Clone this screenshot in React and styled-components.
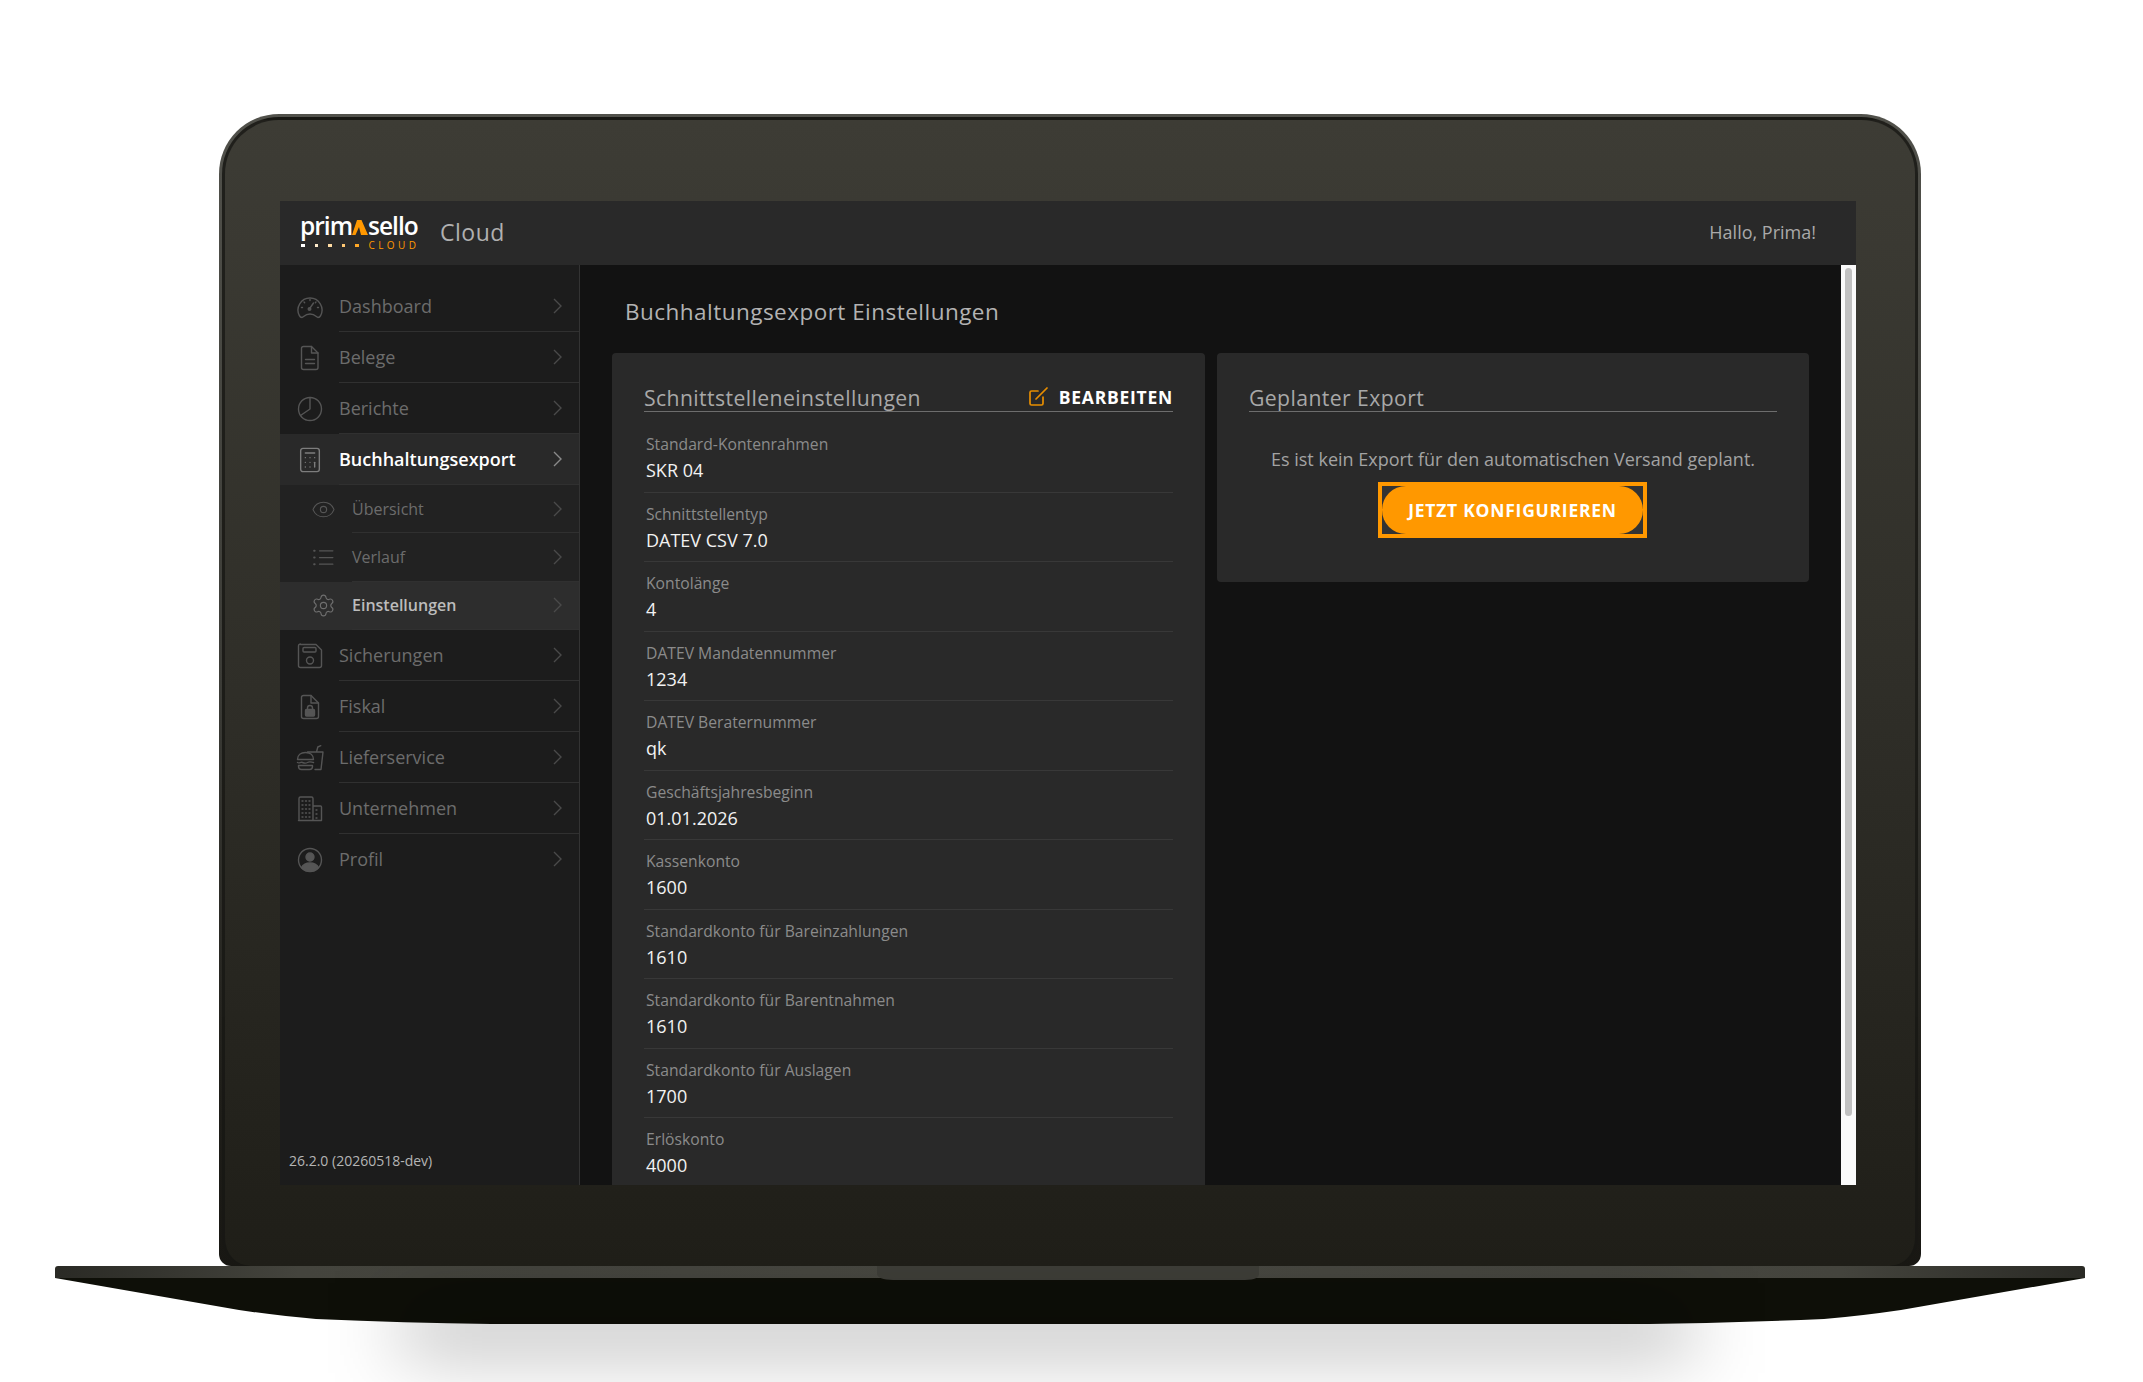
import React from "react";
import styled, { createGlobalStyle } from "styled-components";
import { Calculator, Eye, Settings } from "lucide-react";

const GlobalStyle = createGlobalStyle`
  html, body {
    margin: 0;
    padding: 0;
    background: #fff;
    font-family: "Open Sans", "Noto Sans", sans-serif;
  }
  * { box-sizing: border-box; }
`;

const Page = styled.div`
  position: relative;
  width: 2143px;
  height: 1382px;
  padding-top: 114px;
  overflow: hidden;
  background: #fff;
`;

const FloorShadow = styled.div`
  position: absolute;
  left: 400px;
  right: 450px;
  top: 1305px;
  height: 46px;
  background: rgba(0, 0, 0, 0.3);
  filter: blur(38px);
`;

const LidEdge = styled.div`
  position: relative;
  width: 1702px;
  height: 1152px;
  margin-left: 219px;
  padding: 3px 3px 0;
  border-radius: 60px 60px 12px 12px;
  background: linear-gradient(180deg, #51514b 0%, #3b3b36 50%, #1f1e19 85%, #181713 100%);
`;

const Lid = styled.div`
  height: 100%;
  padding: 81px 0 0 55px;
  border: 3px solid rgba(22, 22, 19, 0.72);
  border-bottom: 0;
  border-radius: 57px 57px 28px 28px;
  background: linear-gradient(180deg, #3d3c35 0%, #2f2e28 50%, #1f1e18 100%);
`;

const Screen = styled.div`
  width: 1576px;
  height: 984px;
  display: flex;
  flex-direction: column;
  overflow: hidden;
`;

const Header = styled.header`
  height: 64px;
  flex: none;
  display: flex;
  align-items: center;
  padding: 0 40px 0 20px;
  background: #292929;
`;

const Logo = styled.div`
  width: 116px;
  display: flex;
  flex-direction: column;
`;

const Wordmark = styled.div`
  display: flex;
  align-items: baseline;
  justify-content: space-between;
  height: 20px;
  font-weight: 600;
  font-size: 24.5px;
  line-height: 20px;
  letter-spacing: -1px;
  color: #fff;

  svg {
    flex: none;
  }
`;

const LogoTail = styled.div`
  display: flex;
  align-items: center;
  justify-content: space-between;
  height: 10px;
  margin-top: 4.5px;
`;

const Dots = styled.div`
  display: flex;
  gap: 10px;
  margin-left: 1px;
`;

const Dot = styled.i`
  width: 3.5px;
  height: 3.5px;
  background: ${(p) => p.$color};
`;

const CloudMark = styled.span`
  font-size: 10px;
  line-height: 10px;
  letter-spacing: 3.4px;
  margin-right: -3.4px;
  color: #ff9800;
`;

const AppName = styled.div`
  margin: 0 0 2px 24px;
  font-size: 23px;
  letter-spacing: 0.5px;
  color: #b0b0b0;
`;

const Greeting = styled.div`
  margin: 0 0 2px auto;
  font-size: 18px;
  color: #a9a9a9;
`;

const Body = styled.div`
  flex: 1;
  display: flex;
  min-height: 0;
`;

const Sidebar = styled.aside`
  width: 300px;
  flex: none;
  display: flex;
  flex-direction: column;
  padding-top: 16px;
  border-right: 1px solid #333;
  background: #1c1c1c;
`;

const NavRow = styled.div`
  height: ${(p) => (p.$sub ? "48.4px" : "51px")};
  display: flex;
  background: ${(p) =>
    p.$current ? "#2d2d2d" : p.$open ? "#292929" : p.$sub ? "#222" : "transparent"};
`;

const NavIconSlot = styled.div`
  width: ${(p) => (p.$sub ? "72px" : "59px")};
  flex: none;
  display: flex;
  align-items: center;
  justify-content: ${(p) => (p.$sub ? "flex-end" : "center")};
  padding-right: ${(p) => (p.$sub ? "16px" : "0")};
  color: ${(p) => (p.$open ? "#7d7d7d" : p.$current ? "#6e6e6e" : "#555")};

  svg {
    display: block;
  }
`;

const NavLabel = styled.div`
  flex: 1;
  display: flex;
  align-items: center;
  justify-content: space-between;
  padding-right: 17px;
  border-bottom: 1px solid ${(p) => (p.$last ? "transparent" : "#303030")};
  font-size: ${(p) => (p.$sub ? "16px" : "18px")};
  font-weight: ${(p) => (p.$open || p.$current ? 600 : 400)};
  color: ${(p) => (p.$open ? "#fff" : p.$current ? "#bcbcbc" : "#6c6c6c")};
`;

const Chevron = styled.svg`
  width: 9px;
  height: 16px;
  fill: none;
  stroke: ${(p) => (p.$open ? "#8a8a8a" : "#4a4a4a")};
  stroke-width: 1.4;
`;

const Version = styled.div`
  margin-top: auto;
  padding: 0 0 14px 9px;
  font-size: 14px;
  line-height: 20px;
  color: #b5b5b5;
`;

const Main = styled.main`
  flex: 1;
  min-width: 0;
  padding: 32px 32px 0;
  overflow: hidden;
  background: #121212;
`;

const PageTitle = styled.h1`
  margin: 0 0 26px 13px;
  font-size: 22.5px;
  line-height: 30px;
  font-weight: 400;
  letter-spacing: 0.47px;
  color: #b3b3b3;
`;

const Columns = styled.div`
  display: grid;
  grid-template-columns: 593px 592px;
  gap: 12px;
  align-items: start;
`;

const Card = styled.section`
  padding: 30px 32px ${(p) => (p.$tall ? "0" : "44px")};
  border-radius: 4px;
  background: #292929;
`;

const CardHead = styled.div`
  height: 29px;
  padding-top: 2px;
  display: flex;
  align-items: center;
  justify-content: space-between;
  border-bottom: 1px solid #6d6d6d;
`;

const CardTitle = styled.h2`
  margin: 0;
  font-size: 21.2px;
  line-height: 26px;
  font-weight: 400;
  letter-spacing: 0.4px;
  color: #a8a8a8;
`;

const EditLink = styled.button`
  display: flex;
  align-items: center;
  gap: 11px;
  padding: 0 0 2px;
  border: 0;
  background: none;
  font: 700 17.5px "Open Sans", sans-serif;
  letter-spacing: 0.75px;
  color: #fff;

  svg {
    display: block;
    fill: none;
    stroke: #e88e00;
    stroke-width: 1.7;
    stroke-linecap: round;
  }
`;

const Fields = styled.div`
  margin-top: 11px;
`;

const Field = styled.div`
  height: 69.55px;
  padding: 10px 0 0 2px;
  border-bottom: 1px solid #383838;
`;

const FieldLabel = styled.div`
  font-size: 15.7px;
  line-height: 22px;
  color: #8b8b8b;
`;

const FieldValue = styled.div`
  margin-top: 2px;
  font-size: 18px;
  line-height: 26px;
  color: #f2f2f2;
`;

const EmptyNote = styled.p`
  margin: 34px 0 10px;
  text-align: center;
  font-size: 18px;
  line-height: 26px;
  color: #a3a3a3;
`;

const FocusRing = styled.div`
  width: 269px;
  height: 56px;
  margin: 0 0 0 129px;
  border: 4px solid #ff9800;
  background: #333;
`;

const PrimaryButton = styled.button`
  width: 100%;
  height: 100%;
  border: 0;
  border-radius: 24px;
  background: #ff9800;
  font: 700 17.5px "Open Sans", sans-serif;
  letter-spacing: 0.75px;
  color: #fff;
`;

const Scrollbar = styled.div`
  width: 15px;
  flex: none;
  padding: 3px 4px 0;
  background: #fafafa;
`;

const ScrollThumb = styled.div`
  height: 848px;
  border-radius: 4px;
  background: #c1c1c1;
`;

const Base = styled.svg`
  display: block;
  width: 2030px;
  height: 60px;
  margin-left: 55px;
`;

const Line = ({ children, size = 28 }) => (
  <svg
    width={size}
    height={size}
    viewBox="0 0 28 28"
    fill="none"
    stroke="currentColor"
    strokeWidth="1.4"
    strokeLinecap="round"
    strokeLinejoin="round"
  >
    {children}
  </svg>
);

const GaugeIcon = () => (
  <Line>
    <path d="M6 24.500c-1.200 0-2-.5-2.600-1.900A12 12 0 1 1 24.600 22.600c-.6 1.400-1.400 1.900-2.600 1.900-1.500 0-2.600-3.500-8-3.500s-6.500 3.500-8 3.500z" />
    <path d="M13 16.500l4.500-6.500" />
    <circle cx="13.500" cy="16" r="1.300" />
    <path d="M14 6.500v1M8 9l.7.7M20 9l-.7.7M5.500 14.500h1M21.500 14.500h1" />
  </Line>
);

const DocIcon = () => (
  <Line>
    <path d="M7.500 2.500h8l6.500 6.500v14.500a2 2 0 0 1-2 2H7.500a2 2 0 0 1-2-2v-19a2 2 0 0 1 2-2z" />
    <path d="M15.500 2.500V9H22M9.500 15.500h9M9.500 19.500h9" />
  </Line>
);

const PieIcon = () => (
  <Line>
    <circle cx="14" cy="14" r="11.500" />
    <path d="M14 2.500V14L4.500 20.500" />
  </Line>
);

const ListIcon = () => (
  <Line size={25}>
    <path d="M9.500 6.500h15M9.500 14h15M9.500 21.500h15" />
    <path strokeWidth="2.200" d="M3.500 6.500h.6M3.500 14h.6M3.500 21.500h.6" />
  </Line>
);

const FloppyIcon = () => (
  <Line>
    <path d="M4.500 2.500h15.500l5.500 5.500v15.500a2 2 0 0 1-2 2h-19a2 2 0 0 1-2-2v-19.500a2 2 0 0 1 2-2z" />
    <rect x="7" y="5.500" width="13" height="4.500" rx="1" />
    <circle cx="14" cy="18.500" r="3.500" />
  </Line>
);

const LockDocIcon = () => (
  <Line>
    <path d="M7.500 2.500h7.500l7.500 7.500v13.500a2 2 0 0 1-2 2h-13a2 2 0 0 1-2-2v-19a2 2 0 0 1 2-2z" />
    <path d="M15 2.500V10h7.500" />
    <rect x="9.500" y="16.500" width="9" height="6.500" rx="1" fill="currentColor" />
    <path d="M11.500 16.500v-1.500a2.500 2.500 0 0 1 5 0v1.500" />
  </Line>
);

const FoodIcon = () => (
  <Line>
    <path d="M11.500 8H27l-2 17.500h-6M20.500 8l1.300-5 3-1.300" />
    <path d="M1.500 15.500C1.500 11 5 8.500 9.500 8.500s8 2.500 8 7z" />
    <path d="M1.500 18.500c2 1.300 3-.9 5 0s3 1.300 5 0 3-.6 6 0" />
    <path d="M2.500 21.500h14v1a3 3 0 0 1-3 3h-8a3 3 0 0 1-3-3z" />
  </Line>
);

const BuildingIcon = () => (
  <Line>
    <path d="M3 25.500V3.500A1.500 1.500 0 0 1 4.500 2h11A1.500 1.500 0 0 1 17 3.500v22M17 11h7.500a1 1 0 0 1 1 1v13.500H2.500" />
    <path
      strokeDasharray="1 2.500"
      d="M6 6h8M6 10h8M6 14h8M6 18h8M6 22h8M20 15h3M20 19h3M20 23h3"
    />
  </Line>
);

const PersonIcon = () => (
  <Line>
    <circle cx="14" cy="14" r="11.500" />
    <circle cx="14" cy="11" r="4" fill="currentColor" />
    <path d="M5.500 21.500c2-3.500 5-4.500 8.500-4.500s6.500 1 8.500 4.500a11.500 11.500 0 0 1-17 0z" fill="currentColor" />
  </Line>
);

const primary = [
  { label: "Dashboard", icon: <GaugeIcon /> },
  { label: "Belege", icon: <DocIcon /> },
  { label: "Berichte", icon: <PieIcon /> },
];

const secondary = [
  { label: "Sicherungen", icon: <FloppyIcon /> },
  { label: "Fiskal", icon: <LockDocIcon /> },
  { label: "Lieferservice", icon: <FoodIcon /> },
  { label: "Unternehmen", icon: <BuildingIcon /> },
  { label: "Profil", icon: <PersonIcon />, last: true },
];

const sub = [
  { label: "Übersicht", icon: <Eye size={25} strokeWidth={1.1} /> },
  { label: "Verlauf", icon: <ListIcon /> },
  { label: "Einstellungen", icon: <Settings size={25} strokeWidth={1.1} />, current: true },
];

const fields = [
  ["Standard-Kontenrahmen", "SKR 04"],
  ["Schnittstellentyp", "DATEV CSV 7.0"],
  ["Kontolänge", "4"],
  ["DATEV Mandatennummer", "1234"],
  ["DATEV Beraternummer", "qk"],
  ["Geschäftsjahresbeginn", "01.01.2026"],
  ["Kassenkonto", "1600"],
  ["Standardkonto für Bareinzahlungen", "1610"],
  ["Standardkonto für Barentnahmen", "1610"],
  ["Standardkonto für Auslagen", "1700"],
  ["Erlöskonto", "4000"],
];

const dotColors = ["#fff", "#ffeccc", "#ffdca3", "#ffc873", "#ffa826"];

const NavItem = ({ item, isSub, open }) => (
  <NavRow $sub={isSub} $open={open} $current={item.current}>
    <NavIconSlot $sub={isSub} $open={open} $current={item.current}>
      {item.icon}
    </NavIconSlot>
    <NavLabel $sub={isSub} $open={open} $current={item.current} $last={item.last}>
      {item.label}
      <Chevron $open={open} viewBox="0 0 9 16">
        <path d="M1 1l7 7-7 7" />
      </Chevron>
    </NavLabel>
  </NavRow>
);

export default function App() {
  return (
    <Page>
      <GlobalStyle />
      <FloorShadow />
      <LidEdge>
        <Lid>
          <Screen>
            <Header>
              <Logo>
                <Wordmark>
                  prim
                  <svg width="16" height="15" viewBox="0 0 16 15">
                    <polygon points="5,0 9.500,0 16,15 9,15 7,7 3.500,15 0,15" fill="#ff9800" />
                  </svg>
                  sello
                </Wordmark>
                <LogoTail>
                  <Dots>
                    {dotColors.map((c) => (
                      <Dot key={c} $color={c} />
                    ))}
                  </Dots>
                  <CloudMark>CLOUD</CloudMark>
                </LogoTail>
              </Logo>
              <AppName>Cloud</AppName>
              <Greeting>Hallo, Prima!</Greeting>
            </Header>
            <Body>
              <Sidebar>
                {primary.map((item) => (
                  <NavItem key={item.label} item={item} />
                ))}
                <NavItem
                  open
                  item={{ label: "Buchhaltungsexport", icon: <Calculator size={28} strokeWidth={1.2} /> }}
                />
                {sub.map((item) => (
                  <NavItem key={item.label} item={item} isSub />
                ))}
                {secondary.map((item) => (
                  <NavItem key={item.label} item={item} />
                ))}
                <Version>26.2.0 (20260518-dev)</Version>
              </Sidebar>
              <Main>
                <PageTitle>Buchhaltungsexport Einstellungen</PageTitle>
                <Columns>
                  <Card $tall>
                    <CardHead>
                      <CardTitle>Schnittstelleneinstellungen</CardTitle>
                      <EditLink>
                        <svg width="20" height="20" viewBox="0 0 20 20">
                          <path d="M10 4H3.500A1.500 1.500 0 0 0 2 5.500v11A1.500 1.500 0 0 0 3.500 18h10a1.500 1.500 0 0 0 1.500-1.500V10" />
                          <path d="M8 12L19 1" />
                        </svg>
                        BEARBEITEN
                      </EditLink>
                    </CardHead>
                    <Fields>
                      {fields.map(([label, value]) => (
                        <Field key={label}>
                          <FieldLabel>{label}</FieldLabel>
                          <FieldValue>{value}</FieldValue>
                        </Field>
                      ))}
                    </Fields>
                  </Card>
                  <Card>
                    <CardHead>
                      <CardTitle>Geplanter Export</CardTitle>
                    </CardHead>
                    <EmptyNote>Es ist kein Export für den automatischen Versand geplant.</EmptyNote>
                    <FocusRing>
                      <PrimaryButton>JETZT KONFIGURIEREN</PrimaryButton>
                    </FocusRing>
                  </Card>
                </Columns>
              </Main>
              <Scrollbar>
                <ScrollThumb />
              </Scrollbar>
            </Body>
          </Screen>
        </Lid>
      </LidEdge>
      <Base viewBox="0 0 2030 60">
        <defs>
          <linearGradient id="strip" x1="0" x2="1" y1="0" y2="0">
            <stop offset="0" stopColor="#2a2a25" />
            <stop offset="0.12" stopColor="#44443d" />
            <stop offset="0.5" stopColor="#4a4a43" />
            <stop offset="0.88" stopColor="#44443d" />
            <stop offset="1" stopColor="#2a2a25" />
          </linearGradient>
        </defs>
        <path
          d="M0 12L184 44Q225 50 261 53Q350 57 436 58H1594Q1680 57 1769 53Q1805 50 1846 44L2030 12Z"
          fill="#0e0f08"
        />
        <path d="M3 0H2027a3 3 0 0 1 3 3V12H0V3a3 3 0 0 1 3-3z" fill="url(#strip)" />
        <path d="M822 0H1204V8C1204 11 1200 14 1190 14H838C828 14 822 11 822 8Z" fill="#3f3f39" />
      </Base>
    </Page>
  );
}
